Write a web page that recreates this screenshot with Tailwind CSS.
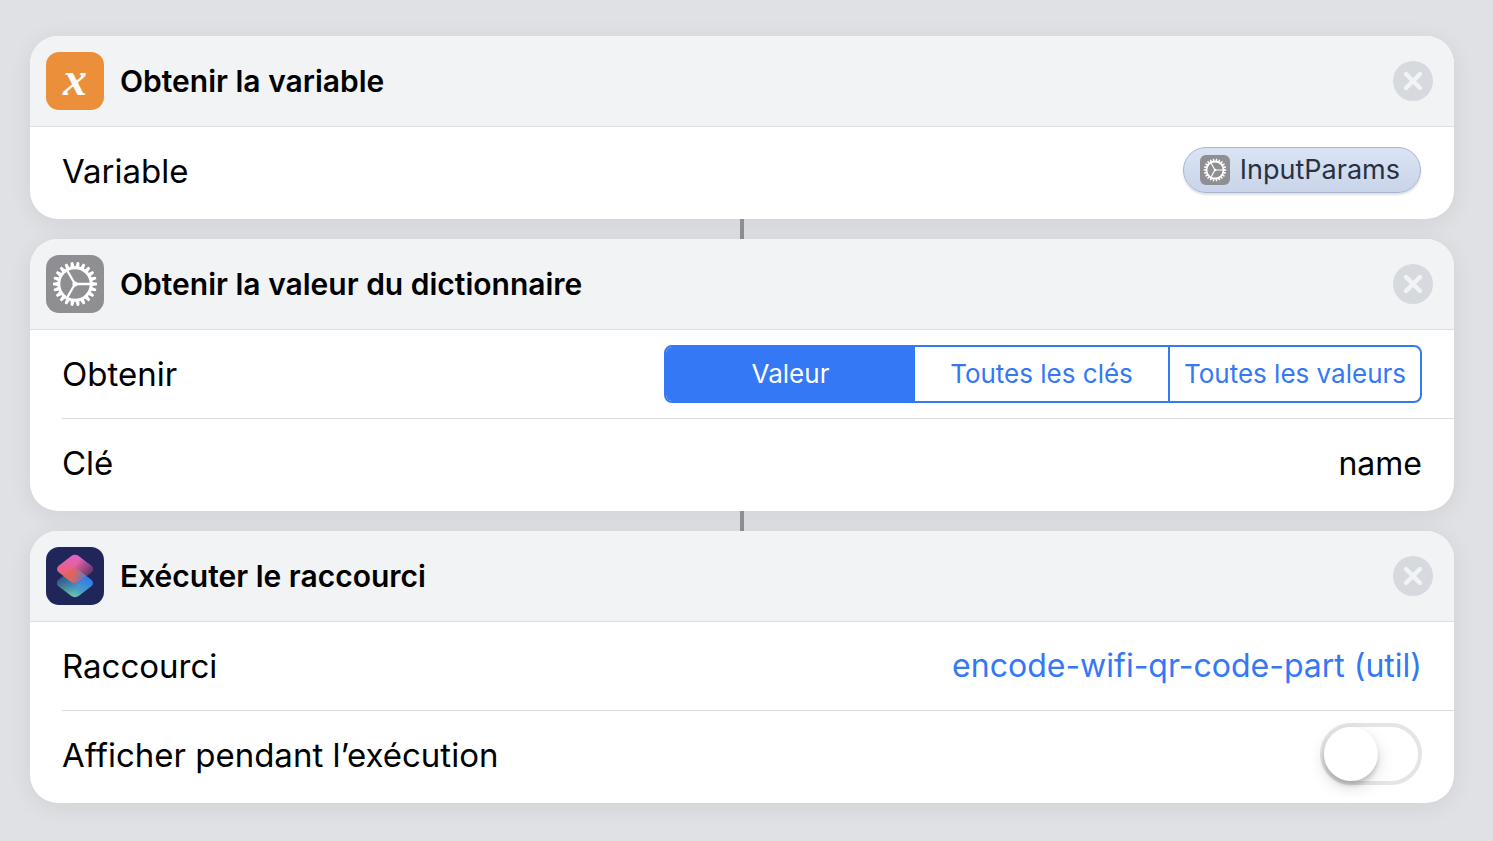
<!DOCTYPE html>
<html lang="fr">
<head>
<meta charset="utf-8">
<meta name="viewport" content="width=device-width, initial-scale=1">
<title>Raccourcis</title>
<script src="https://cdn.jsdelivr.net/npm/@tailwindcss/browser@4"></script>
</head>
<body class="min-h-screen bg-[#e0e1e5] font-['Inter',sans-serif] text-black">
<svg class="hidden" aria-hidden="true">
  <defs>
    <path id="tooth" d="M-2.2-16 -1.2-22H1.2L2.2-16Z" fill="#fff"/>
    <symbol id="gear" viewBox="-29 -29 58 58">
      <g id="teeth">
        <use href="#tooth" transform="rotate(8.18)"/><use href="#tooth" transform="rotate(24.55)"/><use href="#tooth" transform="rotate(40.91)"/><use href="#tooth" transform="rotate(57.27)"/><use href="#tooth" transform="rotate(73.64)"/><use href="#tooth" transform="rotate(90)"/><use href="#tooth" transform="rotate(106.36)"/><use href="#tooth" transform="rotate(122.73)"/><use href="#tooth" transform="rotate(139.09)"/><use href="#tooth" transform="rotate(155.45)"/><use href="#tooth" transform="rotate(171.82)"/>
      </g>
      <use href="#teeth" transform="rotate(180)"/>
      <circle r="16.2" fill="none" stroke="#fff" stroke-width="3"/>
      <path d="M0 0H16M0 0-8-13.9M0 0-8 13.9" stroke="#fff" stroke-width="2.3"/>
      <circle r="2.6" fill="#fff"/>
    </symbol>
    <symbol id="close" viewBox="0 0 40 40">
      <circle cx="20" cy="20" r="20" fill="#d6d9de"/>
      <path d="M13 13 27 27M27 13 13 27" stroke="#f2f3f5" stroke-width="4.4" stroke-linecap="round"/>
    </symbol>
  </defs>
</svg>
<main class="flex flex-col pt-9 pr-[39px] pb-9 pl-[30px]">

  <section class="overflow-hidden rounded-[28px] bg-white shadow-[0_4px_24px_rgba(0,0,0,0.07)]">
    <header class="flex items-center gap-4 border-b border-[#dcdee2] bg-[#f2f3f5] py-4 pr-[21px] pl-4">
      <span class="flex size-[58px] items-center justify-center rounded-[13px] bg-[#ec8f3a] pb-1 font-['Liberation_Serif',serif] text-[48px] leading-none font-bold text-white italic" aria-hidden="true">x</span>
      <h2 class="flex-1 text-[30px] leading-10 font-semibold">Obtenir la variable</h2>
      <button type="button" aria-label="Supprimer" class="size-10"><svg class="size-10"><use href="#close"/></svg></button>
    </header>
    <div class="flex h-[92px] items-center justify-between pr-[33px] pb-1 pl-8">
      <span class="text-[33px] leading-10">Variable</span>
      <button type="button" class="mt-5 flex h-[46px] items-center gap-2.5 self-start rounded-full border border-[#aab4d0] bg-linear-to-b from-[#dae4f4] to-[#cad4ea] pr-5 pl-4 text-[27px] text-[#273142] shadow-[0_2px_2px_rgba(0,0,0,0.12)]">
        <svg class="size-[30px] rounded-md bg-[#8e8e93]"><use href="#gear"/></svg>InputParams</button>
    </div>
  </section>

  <div class="h-5 w-1 self-center bg-[#8e8e93]"></div>

  <section class="overflow-hidden rounded-[28px] bg-white shadow-[0_4px_24px_rgba(0,0,0,0.07)]">
    <header class="flex items-center gap-4 border-b border-[#dcdee2] bg-[#f2f3f5] py-4 pr-[21px] pl-4">
      <svg class="size-[58px] rounded-[13px] bg-[#8e8e93]" aria-hidden="true"><use href="#gear"/></svg>
      <h2 class="flex-1 text-[30px] leading-10 font-semibold">Obtenir la valeur du dictionnaire</h2>
      <button type="button" aria-label="Supprimer" class="size-10"><svg class="size-10"><use href="#close"/></svg></button>
    </header>
    <div class="pl-8">
      <div class="flex h-[89px] items-center justify-between border-b border-[#dcdde0] pr-8">
        <span id="obtenir" class="text-[33px] leading-10">Obtenir</span>
        <div role="group" aria-labelledby="obtenir" class="grid h-[58px] w-[758px] grid-cols-[249fr_253fr_252fr] overflow-hidden rounded-lg border-2 border-[#3478f6] bg-white text-[26px] text-[#3478f6]">
          <button type="button" aria-pressed="true" class="bg-[#3478f6] pb-0.5 text-white">Valeur</button>
          <button type="button" aria-pressed="false" class="pb-0.5">Toutes les clés</button>
          <button type="button" aria-pressed="false" class="border-l-2 border-[#3478f6] pb-0.5">Toutes les valeurs</button>
        </div>
      </div>
      <div class="flex h-[92px] items-center justify-between pr-8 pb-1">
        <label for="cle" class="text-[33px] leading-10">Clé</label>
        <input id="cle" type="text" value="name" class="w-96 bg-transparent pt-0.5 text-right text-[32px] leading-10 outline-none">
      </div>
    </div>
  </section>

  <div class="h-5 w-1 self-center bg-[#8e8e93]"></div>

  <section class="overflow-hidden rounded-[28px] bg-white shadow-[0_4px_24px_rgba(0,0,0,0.07)]">
    <header class="flex items-center gap-4 border-b border-[#dcdee2] bg-[#f2f3f5] py-4 pr-[21px] pl-4">
      <svg class="size-[58px] rounded-[13px] bg-[#20265a]" viewBox="0 0 58 58" aria-hidden="true">
        <defs>
          <linearGradient id="low" x1="0.3" y1="1" x2="0.75" y2="0.3"><stop offset="0" stop-color="#74d8a0"/><stop offset="0.45" stop-color="#4b9fc4"/><stop offset="1" stop-color="#2f7cf0"/></linearGradient>
          <linearGradient id="lowshade" x1="0" y1="0.3" x2="0.6" y2="0.6"><stop offset="0" stop-color="#20265a" stop-opacity="0.65"/><stop offset="1" stop-color="#20265a" stop-opacity="0"/></linearGradient>
          <linearGradient id="high" x1="0.6" y1="0" x2="0.35" y2="1"><stop offset="0" stop-color="#dd62c8"/><stop offset="0.55" stop-color="#e8618a"/><stop offset="1" stop-color="#ec6350"/></linearGradient>
          <linearGradient id="highshade" x1="1" y1="0.65" x2="0.5" y2="0.35"><stop offset="0" stop-color="#20265a" stop-opacity="0.75"/><stop offset="1" stop-color="#20265a" stop-opacity="0"/></linearGradient>
          <linearGradient id="mid" x1="0.15" y1="0.6" x2="0.85" y2="0.8"><stop offset="0" stop-color="#ec6354"/><stop offset="0.45" stop-color="#d8665f"/><stop offset="1" stop-color="#3f7fe6"/></linearGradient>
          <path id="tile" d="M-4-12.8Q0-15.6 4-12.8L16-3.6Q20 0 16 3.6L4 12.8Q0 15.6-4 12.8L-16 3.6Q-20 0-16-3.6Z"/>
          <clipPath id="lowclip"><use href="#tile" x="29" y="36"/></clipPath>
        </defs>
        <g transform="translate(29 36)"><use href="#tile" fill="url(#low)"/><use href="#tile" fill="url(#lowshade)"/></g>
        <g transform="translate(29 22)"><use href="#tile" fill="url(#high)"/><use href="#tile" fill="url(#highshade)"/></g>
        <g clip-path="url(#lowclip)"><use href="#tile" x="29" y="22" fill="url(#mid)"/></g>
      </svg>
      <h2 class="flex-1 text-[30px] leading-10 font-semibold">Exécuter le raccourci</h2>
      <button type="button" aria-label="Supprimer" class="size-10"><svg class="size-10"><use href="#close"/></svg></button>
    </header>
    <div class="pl-8">
      <div class="flex h-[89px] items-center justify-between border-b border-[#dcdde0] pr-8">
        <span class="text-[33px] leading-10">Raccourci</span>
        <a href="#" class="text-[32px] leading-10 text-[#3478f6]">encode-wifi-qr-code-part (util)</a>
      </div>
      <div class="flex h-[92px] items-center justify-between pr-8 pb-1">
        <label for="show" class="text-[33px] leading-10">Afficher pendant l’exécution</label>
        <input id="show" type="checkbox" role="switch" class="mt-3 flex h-[62px] w-[102px] appearance-none items-center self-start rounded-full border-4 border-[#e5e5e5] before:size-[54px] before:rounded-full before:bg-white before:shadow-[0_6px_16px_rgba(0,0,0,0.15),0_4px_4px_rgba(0,0,0,0.16)] checked:justify-end checked:bg-[#34c759]">
      </div>
    </div>
  </section>
</main>
</body>
</html>
